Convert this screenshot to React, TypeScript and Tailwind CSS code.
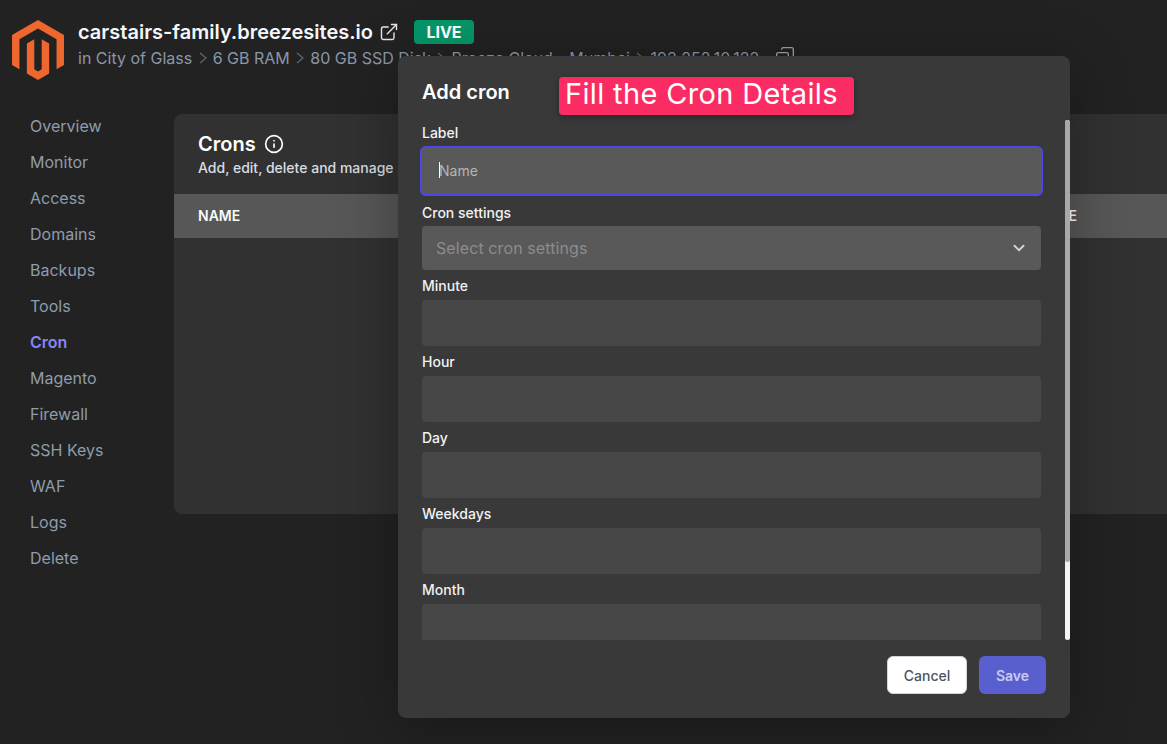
import { SiMagento } from "react-icons/si";
import { ExternalLink, Info, Copy, ChevronDown } from "lucide-react";

const nav = ["Overview", "Monitor", "Access", "Domains", "Backups", "Tools", "Cron", "Magento", "Firewall", "SSH Keys", "WAF", "Logs", "Delete"];
const crumbs = ["in City of Glass", "6 GB RAM", "80 GB SSD Disk", "Breeze Cloud - Mumbai", "192.252.10.122"];
const fields = ["Minute", "Hour", "Day", "Weekdays", "Month"];

export default function App() {
  return (
    <div className="relative h-[744px] w-[1167px] overflow-hidden bg-[#222222] font-['Inter',sans-serif]">
      <header className="flex h-[108px] items-start pl-3 pt-5">
        <div className="flex h-[60px] w-[52px] items-center justify-center">
          <SiMagento className="h-[60px] w-[60px] shrink-0 text-[#ee672f]" />
        </div>
        <div className="ml-[14px]">
          <div className="flex h-6 items-center">
            <span className="text-[20px] font-semibold text-[#f5f7fa]">carstairs-family.breezesites.io</span>
            <ExternalLink className="ml-[6px] h-5 w-5 text-[#e5e7eb]" strokeWidth={1.7} />
            <span className="ml-[15px] flex h-6 w-[60px] items-center justify-center rounded bg-[#059669] text-[16px] font-bold text-white">LIVE</span>
          </div>
          <div className="mt-[2px] flex h-6 items-center text-[16px] text-[#8997a8]">
            {crumbs.map((c, i) => (
              <span key={c} className="flex items-center">
                {i > 0 && (
                  <svg viewBox="0 0 8 12" className="ml-[6.5px] mr-[6px] h-3 w-2 text-[#5f6773]" fill="none" stroke="currentColor" strokeWidth={1.2}>
                    <path d="M1 1l6 5-6 5" />
                  </svg>
                )}
                {c}
              </span>
            ))}
            <Copy className="ml-4 -mt-[4px] h-5 w-5 -scale-x-100 text-[#9ca3af]" strokeWidth={1.6} />
          </div>
        </div>
      </header>

      <div className="flex pt-[6px]">
        <nav className="-mt-[6px] w-[174px] pl-[30px]">
          {nav.map((n) => (
            <div
              key={n}
              className={n === "Cron" ? "flex h-9 items-center text-[16px] font-semibold text-[#8486f5]" : "flex h-9 items-center text-[16px] text-[#8f9cab]"}
            >
              {n}
            </div>
          ))}
        </nav>
        <section className="h-[400px] flex-1 rounded-l-lg bg-[#313131]">
          <div className="h-20 pl-6 pt-[17px]">
            <div className="flex items-center gap-2 text-[20px] font-semibold leading-[26px] text-white">
              Crons
              <Info className="h-5 w-5" strokeWidth={2} />
            </div>
            <div className="mt-[1px] text-[14px] font-medium leading-5 text-[#d9dde3]">Add, edit, delete and manage</div>
          </div>
          <div className="flex h-11 items-center justify-between bg-[#575757] pb-[2px] pl-6 pr-[90px] text-[14px] font-semibold text-[#f9fafb]">
            <span>NAME</span>
            <span>SCHEDULE</span>
          </div>
        </section>
      </div>

      <div className="absolute left-[398px] top-14 flex h-[662px] w-[672px] flex-col rounded-lg bg-[#393939] shadow-[0_10px_60px_rgba(0,0,0,0.3)]">
        <div className="h-16 pl-6 pt-6 text-[20px] font-semibold leading-6 text-white">Add cron</div>
        <div className="relative h-[520px] overflow-hidden pl-6 pr-[29px] pt-[3px]">
          <label className="block h-5 text-[14px] font-medium leading-5 text-[#f1f2f4]">Label</label>
          <div className="mt-[5px] flex h-[46px] items-center rounded bg-[#595959] pb-[2px] pl-[17px] text-[14px] text-[#b5b5b5] ring-2 ring-[#4f46e5]">
            <span className="h-4 w-px bg-white" />
            <span className="-ml-px">Name</span>
          </div>
          <label className="mt-[9px] block h-5 text-[14px] font-medium leading-5 text-[#f1f2f4]">Cron settings</label>
          <div className="mt-[3px] flex h-11 items-center justify-between rounded bg-[#595959] pl-[14px] pr-[13px] text-[16px] tracking-[0.1px] text-[#8c8c8c]">
            Select cron settings
            <ChevronDown className="h-[18px] w-[18px] text-[#d4d4d4]" strokeWidth={2.5} />
          </div>
          {fields.map((f) => (
            <div key={f} className="mt-[6px]">
              <label className="block h-5 text-[14px] font-medium leading-5 text-[#f1f2f4]">{f}</label>
              <div className="mt-1 h-[46px] rounded bg-[#474747]" />
            </div>
          ))}
          <div className="absolute right-0 top-0 h-[520px] w-[5px] rounded-sm bg-[#f3f3f3]">
            <div className="h-[442px] rounded-sm bg-[#a8a8a8]" />
          </div>
        </div>
        <div className="flex justify-end gap-3 pr-6 pt-4">
          <button className="h-[38px] w-20 rounded-md border border-[#d1d5db] bg-white text-[14px] font-medium text-[#4b5563]">Cancel</button>
          <button className="h-[38px] w-[67px] rounded-md bg-[#5a5fcf] text-[14px] font-semibold text-[#c9cbee]">Save</button>
        </div>
      </div>

      <div className="absolute left-[559px] top-[77px] flex h-[38px] w-[295px] items-center rounded bg-[#fb2c63] pb-1 pl-[6px] text-[29px] tracking-[0.35px] text-white shadow-[0_2px_6px_rgba(0,0,0,0.35)]">
        Fill the Cron Details
      </div>
    </div>
  );
}
